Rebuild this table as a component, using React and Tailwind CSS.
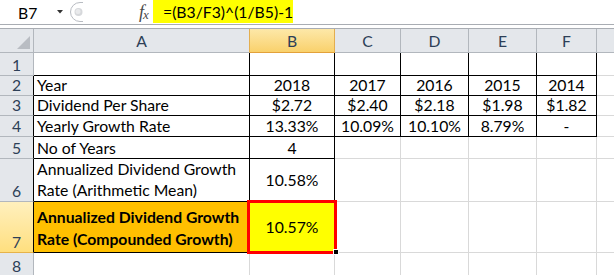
import React from "react";

const K = "border-black";
const G = "border-[#d9d9d9]";

function Cell({ children, r = G, b = G, className = "" }) {
  return (
    <div className={`border-r border-b ${r} ${b} flex min-w-0 whitespace-nowrap ${className}`}>{children}</div>
  );
}

function RowHead({ n, r = "border-[#b2b7bd]", hi = false }) {
  return (
    <div
      className={`border-b border-r ${r} ${
        hi ? "bg-gradient-to-b from-[#fff0bd] to-[#ffdf7e] border-b-[#e6b34a]" : "bg-[#e4e7eb] border-b-[#b2b7bd]"
      } flex items-end justify-center pb-[1px] text-[15.75px] leading-[18px] text-[#2d3f57]`}
    >
      {n}
    </div>
  );
}

const C = "items-end justify-center pb-[1px]";
const L = "items-end pl-[3px] pb-[1px]";

export default function App() {
  return (
    <div className="w-[614px] h-[275px] overflow-hidden bg-white font-['Lato',sans-serif] text-[15.75px] leading-[18px] text-black">
      {/* formula bar */}
      <div className="h-[24px] flex items-stretch bg-white whitespace-nowrap">
        <div className="w-[69px] shrink-0 flex items-center">
          <span className="ml-[18px] leading-[18px] mt-[1px]">B7</span>
          <svg className="ml-auto mr-[6px]" width="6" height="4" viewBox="0 0 6 4">
            <path d="M0 0 H6 L3 3.5 Z" fill="#333" />
          </svg>
        </div>
        <svg width="14" height="24" viewBox="0 0 14 24" className="shrink-0">
          <path d="M14 2.5 H11 A9.5 9.5 0 0 0 11 21.5 H14" fill="#fff" stroke="#b8bcc2" strokeWidth="1" />
          <circle cx="9.5" cy="12" r="4" fill="#d6d8db" />
          <circle cx="9" cy="11.5" r="2.5" fill="#e9eaec" />
        </svg>
        <div className="w-[52px] shrink-0" />
        <div className="w-[18px] shrink-0 flex items-center justify-center font-['Liberation_Serif',serif] italic text-[#4a4a4a]">
          <span className="text-[18px] leading-[18px]">f</span>
          <span className="text-[13px] leading-[13px] mt-[4px] -ml-[1px]">x</span>
        </div>
        <div className="w-[140px] shrink-0 h-[23px] bg-[#ffff00] flex items-center pl-[10px]">
          <span className="leading-[18px] mt-[1px]">=(B3/F3)^(1/B5)-1</span>
        </div>
      </div>
      <div className="h-[4px] border-t border-[#a9adb3] bg-white" />

      {/* sheet */}
      <div className="grid grid-cols-[34px_216px_85px_66px_68px_68px_60px_18px] grid-rows-[24px_23px_20px_20px_21px_22px_43px_51px_24px] border-t border-[#a9adb3]">
        {/* header row */}
        <div className="bg-[#e4e7eb] border-r border-b border-[#b2b7bd] relative overflow-hidden">
          <svg className="absolute right-[3px] bottom-[3px]" width="13" height="13" viewBox="0 0 13 13">
            <path d="M13 0 V13 H0 Z" fill="#b9bdc3" />
          </svg>
        </div>
        <div className="bg-[#e4e7eb] border-r border-b border-[#b2b7bd] border-r-[#e3ae4f] flex items-center justify-center text-[#2d3f57] pt-[1px]">A</div>
        <div className="bg-gradient-to-b from-[#fde8a8] to-[#f9d16b] border-r border-b border-[#e3ae4f] border-b-[#e3a13a] flex items-center justify-center text-[#2d3f57] pt-[1px]">B</div>
        <div className="bg-[#e4e7eb] border-r border-b border-[#b2b7bd] flex items-center justify-center text-[#2d3f57] pt-[1px]">C</div>
        <div className="bg-[#e4e7eb] border-r border-b border-[#b2b7bd] flex items-center justify-center text-[#2d3f57] pt-[1px]">D</div>
        <div className="bg-[#e4e7eb] border-r border-b border-[#b2b7bd] flex items-center justify-center text-[#2d3f57] pt-[1px]">E</div>
        <div className="bg-[#e4e7eb] border-r border-b border-[#b2b7bd] flex items-center justify-center text-[#2d3f57] pt-[1px]">F</div>
        <div className="bg-[#e4e7eb] border-b border-[#b2b7bd]" />

        {/* row 1 */}
        <RowHead n="1" />
        <Cell r={K} b={K} />
        <Cell r={K} b={K} />
        <Cell r={K} b={K} />
        <Cell r={K} b={K} />
        <Cell r={K} b={K} />
        <Cell r={K} b={K} />
        <Cell />

        {/* row 2 */}
        <RowHead n="2" r="border-r-black" />
        <Cell r={K} b={K} className={L}>Year</Cell>
        <Cell r={K} b={K} className={C}>2018</Cell>
        <Cell r={K} b={K} className={C}>2017</Cell>
        <Cell r={K} b={K} className={C}>2016</Cell>
        <Cell r={K} b={K} className={C}>2015</Cell>
        <Cell r={K} b={K} className={C}>2014</Cell>
        <Cell />

        {/* row 3 */}
        <RowHead n="3" r="border-r-black" />
        <Cell r={K} b={K} className={L}>Dividend Per Share</Cell>
        <Cell r={K} b={K} className={C}>$2.72</Cell>
        <Cell r={K} b={K} className={C}>$2.40</Cell>
        <Cell r={K} b={K} className={C}>$2.18</Cell>
        <Cell r={K} b={K} className={C}>$1.98</Cell>
        <Cell r={K} b={K} className={C}>$1.82</Cell>
        <Cell />

        {/* row 4 */}
        <RowHead n="4" r="border-r-black" />
        <Cell r={K} b={K} className={L}>Yearly Growth Rate</Cell>
        <Cell r={K} b={K} className={C}>13.33%</Cell>
        <Cell r={K} b={K} className={C}>10.09%</Cell>
        <Cell r={K} b={K} className={C}>10.10%</Cell>
        <Cell r={K} b={K} className={C}>8.79%</Cell>
        <Cell r={K} b={K} className={C}>-</Cell>
        <Cell />

        {/* row 5 */}
        <RowHead n="5" r="border-r-black" />
        <Cell r={K} b={K} className={L}>No of Years</Cell>
        <Cell r={K} b={K} className={C}>4</Cell>
        <Cell />
        <Cell />
        <Cell />
        <Cell />
        <Cell />

        {/* row 6 */}
        <RowHead n="6" r="border-r-black" />
        <Cell r={K} b={K} className="items-end pl-[3px] pb-[1px] leading-[21px]">
          <span>
            Annualized Dividend Growth
            <br />
            Rate (Arithmetic Mean)
          </span>
        </Cell>
        <Cell r={K} b={K} className="items-center justify-center">10.58%</Cell>
        <Cell />
        <Cell />
        <Cell />
        <Cell />
        <Cell />

        {/* row 7 */}
        <RowHead n="7" r="border-r-black" hi />
        <Cell r={K} b={K} className="items-end pl-[3px] pb-[2px] leading-[22px] font-bold bg-[#ffc000]">
          <span>
            Annualized Dividend Growth
            <br />
            Rate (Compounded Growth)
          </span>
        </Cell>
        <div className="relative border-r border-b border-[#d9d9d9] bg-[#ffff00] flex items-center justify-center">
          10.57%
          <div className="absolute -left-[3px] -top-[2px] w-[90px] h-[54px] border-[3px] border-[#ff0000] z-10" />
          <div className="absolute left-[83px] top-[47px] w-[6px] h-[6px] bg-black border border-white z-20" />
        </div>
        <Cell />
        <Cell />
        <Cell />
        <Cell />
        <Cell />

        {/* row 8 */}
        <RowHead n="8" />
        <Cell />
        <Cell />
        <Cell />
        <Cell />
        <Cell />
        <Cell />
        <Cell />
      </div>
    </div>
  );
}
